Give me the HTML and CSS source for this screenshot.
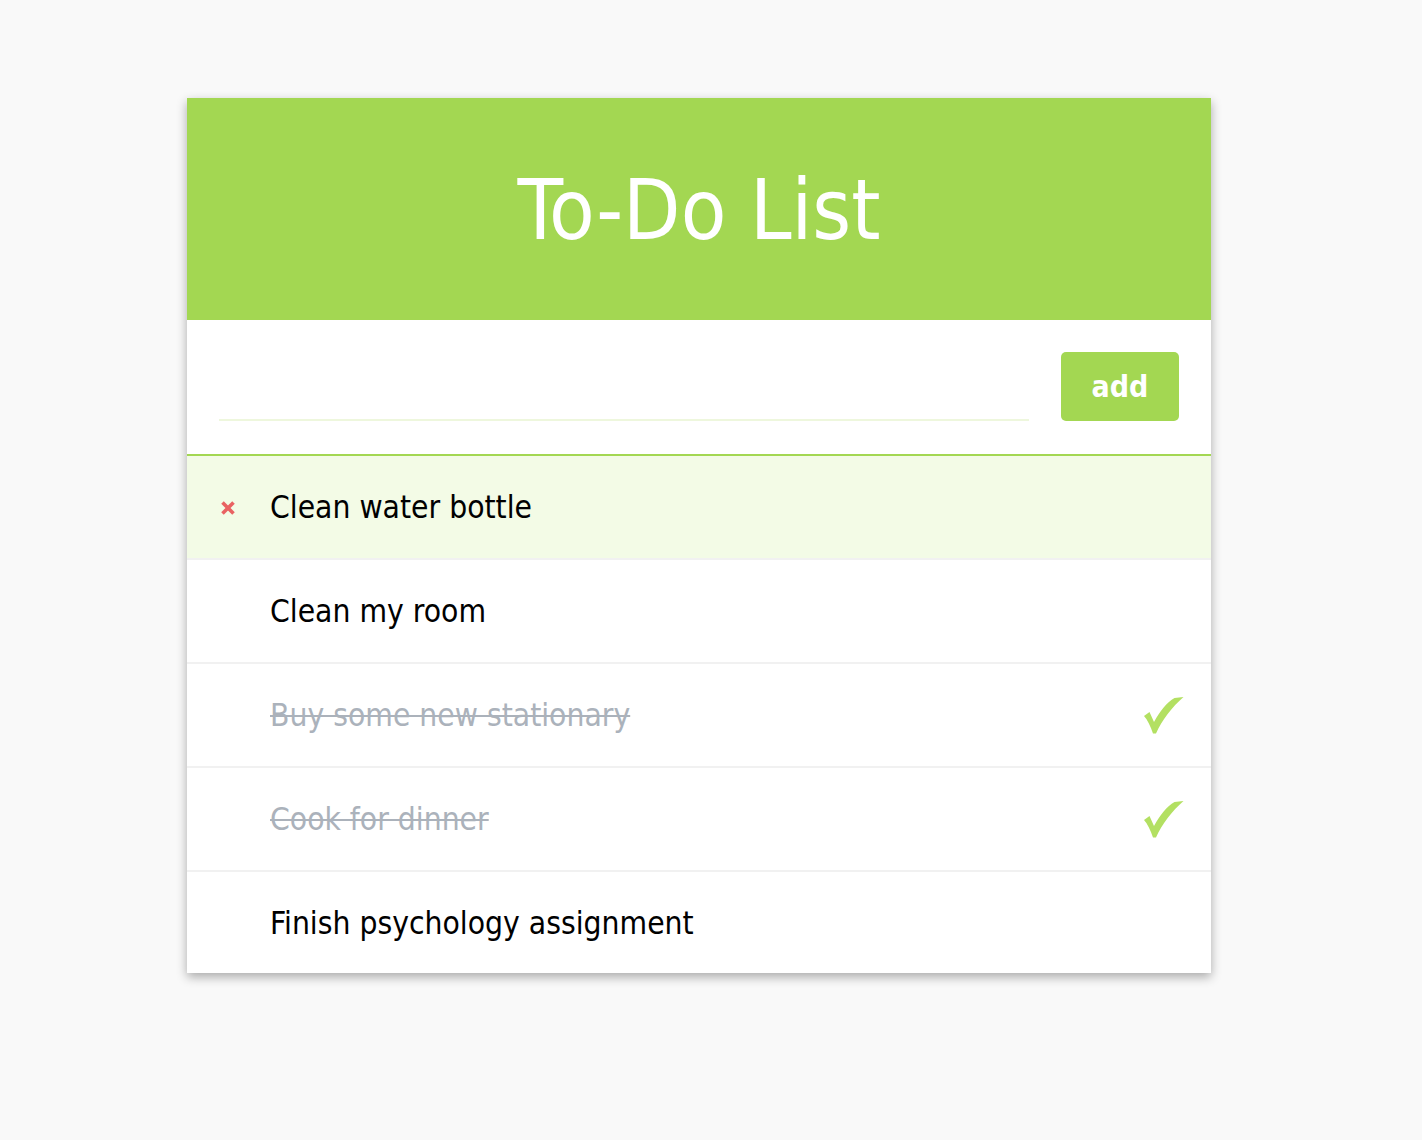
FILE: index.html
```html
<!DOCTYPE html>
<html lang="en">
<head>
<meta charset="utf-8">
<title>To-Do List</title>
<link rel="stylesheet" href="styles.css">
</head>
<body>
<main class="card">
  <header class="card-header">
    <h1 class="title">To-Do List</h1>
  </header>
  <form class="add-form">
    <input class="add-input" type="text" aria-label="New task">
    <button class="add-btn" type="button">add</button>
  </form>
  <ul class="todo-list">
    <li class="todo hover">
      <span class="delete"><svg viewBox="0 0 16 16" width="16" height="16"><path d="M2.5 2.5 L13.5 13.5 M13.5 2.5 L2.5 13.5" stroke="#e96262" stroke-width="3.6" stroke-linecap="butt"/></svg></span>
      <span class="todo-text">Clean water bottle</span>
    </li>
    <li class="todo">
      <span class="delete"></span>
      <span class="todo-text">Clean my room</span>
    </li>
    <li class="todo done">
      <span class="delete"></span>
      <span class="todo-text">Buy some new stationary</span>
      <svg class="check" viewBox="0 0 40 37" width="40" height="37"><path d="M0 19 L5.5 15 L10 25 C16 14 23 5 30.5 1 L39.5 0 C28 10 18 23 12 36.5 L9 36.5 C6.5 29 3.5 23 0 19 Z" fill="#b3e062"/></svg>
    </li>
    <li class="todo done">
      <span class="delete"></span>
      <span class="todo-text">Cook for dinner</span>
      <svg class="check" viewBox="0 0 40 37" width="40" height="37"><path d="M0 19 L5.5 15 L10 25 C16 14 23 5 30.5 1 L39.5 0 C28 10 18 23 12 36.5 L9 36.5 C6.5 29 3.5 23 0 19 Z" fill="#b3e062"/></svg>
    </li>
    <li class="todo">
      <span class="delete"></span>
      <span class="todo-text">Finish psychology assignment</span>
    </li>
  </ul>
</main>
</body>
</html>
```

FILE: styles.css
```css
* { box-sizing: border-box; }

html, body {
  margin: 0;
  padding: 0;
  background: #f9f9f9;
}

body {
  font-family: "DejaVu Sans Condensed", "DejaVu Sans", sans-serif;
  padding-top: 98px;
  padding-bottom: 60px;
}

.card {
  width: 1024px;
  margin: 0 0 0 187px;
  background: #ffffff;
  box-shadow: 0 4px 10px rgba(0, 0, 0, 0.32);
}

.card-header {
  height: 222px;
  background: #a3d752;
  display: flex;
  align-items: center;
  justify-content: center;
}

.title {
  margin: 0;
  color: #ffffff;
  font-weight: normal;
  font-size: 83px;
  line-height: 1;
  padding-top: 2px;
}

.add-form {
  display: flex;
  align-items: flex-end;
  gap: 32px;
  padding: 32px 32px 33px 32px;
  height: 136px;
  border-bottom: 2px solid #a3d752;
}

.add-input {
  flex: 1;
  height: 60px;
  border: none;
  border-bottom: 2px solid #eef7dd;
  outline: none;
  font: inherit;
  font-size: 30px;
  background: transparent;
}

.add-btn {
  width: 118px;
  height: 69px;
  border: none;
  border-radius: 5px;
  background: #a3d752;
  color: #ffffff;
  font-family: inherit;
  font-weight: bold;
  font-size: 30px;
  padding: 0;
}

.todo-list {
  list-style: none;
  margin: 0;
  padding: 0;
}

.todo {
  display: flex;
  align-items: center;
  height: 104px;
  border-bottom: 2px solid #f1f1f1;
  padding: 0 27px 0 33px;
}

.todo:last-child {
  border-bottom: none;
  height: 101px;
}

.todo.hover {
  background: #f3fbe6;
}

.delete {
  width: 50px;
  display: flex;
  align-items: center;
  padding-top: 2px;
}

.todo-text {
  flex: 1;
  font-size: 31.5px;
  color: #000000;
}

.done .todo-text {
  color: #abb2bb;
  text-decoration: line-through;
  text-decoration-thickness: 2px;
}

.check {
  display: block;
}
```
